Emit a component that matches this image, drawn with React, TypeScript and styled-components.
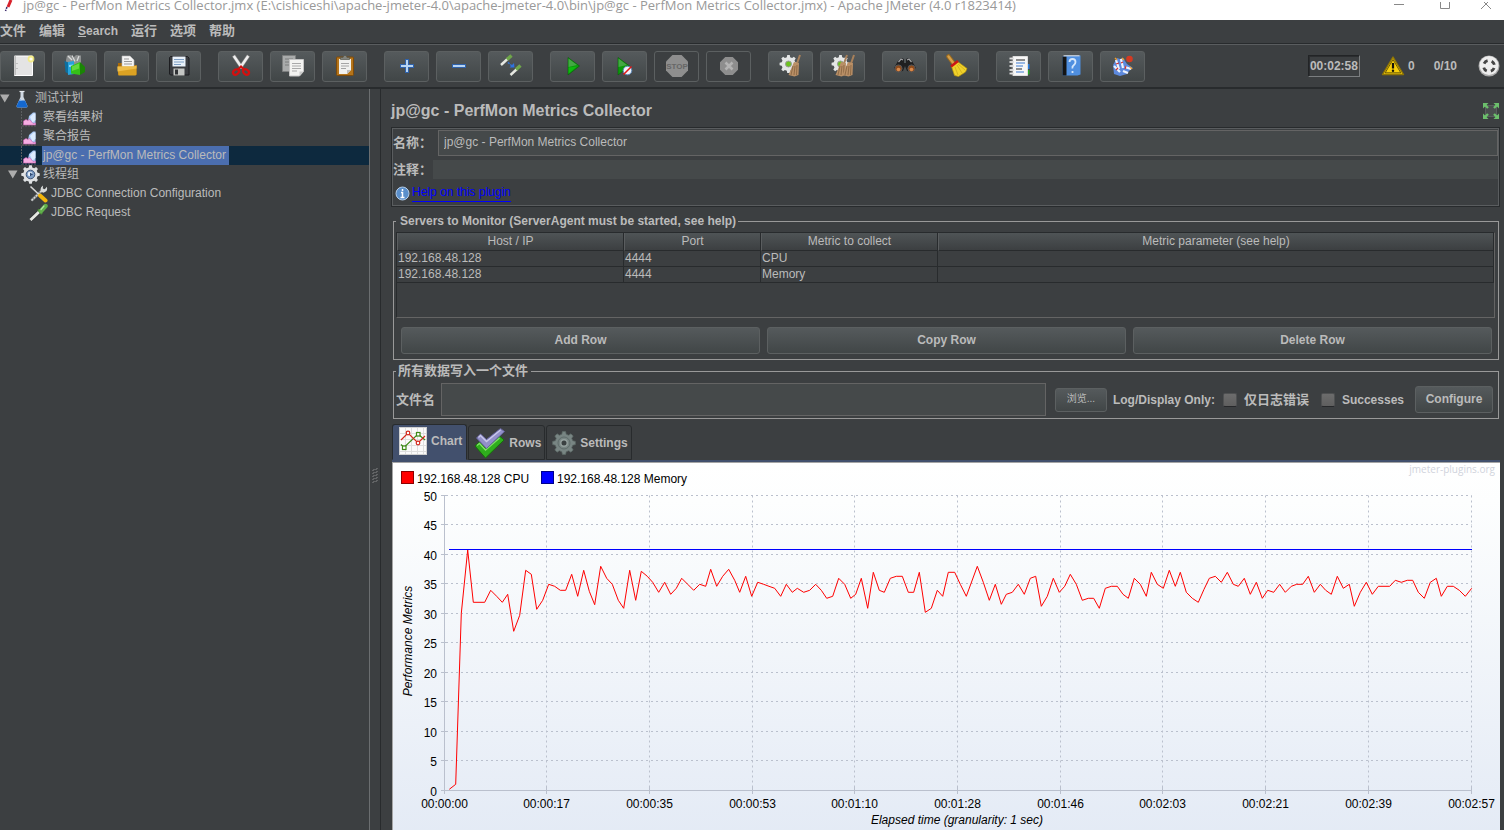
import React from "react";
import styled, { createGlobalStyle, css } from "styled-components";

const c = {
  bg: "#3c3f41",
  text: "#bbbbbb",
  dark: "#282b2d",
  light: "#5a5d5f",
  field: "#45494a",
  fieldBorder: "#646464",
  frame: "#999999",
};

const sans = `"Liberation Sans", "Noto Sans CJK SC", sans-serif`;

const GlobalStyle = createGlobalStyle`
  * { box-sizing: border-box; }
  body { margin: 0; background: ${c.bg}; overflow: hidden; }
  button, input, table, legend, label { font: inherit; color: inherit; }
`;

const Window = styled.div`
  display: flex;
  flex-direction: column;
  height: 100vh;
  overflow: hidden;
  background: ${c.bg};
  color: ${c.text};
  font: 12px/14px ${sans};
`;

/* ---------- title bar ---------- */

const TitleBar = styled.header`
  display: flex;
  align-items: flex-start;
  flex: none;
  height: 20px;
  overflow: hidden;
  background: #fff;
  color: #999;
`;

const TitleText = styled.h1`
  flex: 1;
  margin: 0 0 0 9px;
  font: 400 13px/10px "Open Sans", "Noto Sans", sans-serif;
  white-space: nowrap;
`;

const CaptionButton = styled.button`
  width: 46px;
  height: 14px;
  padding: 0;
  border: 0;
  background: none;
  line-height: 0;
  &:last-child { width: 36px; }
`;

/* ---------- menu ---------- */

const MenuBar = styled.nav`
  display: flex;
  flex: none;
  gap: 13px;
  height: 24px;
  border-bottom: 1px solid ${c.dark};
`;

const MenuButton = styled.button`
  align-self: flex-start;
  padding: 0;
  border: 0;
  background: none;
  font: 700 13px/22px ${sans};
`;

const Latin = styled.span`
  font-size: 12px;
`;

/* ---------- toolbar ---------- */

const ToolBar = styled.div`
  display: flex;
  align-items: center;
  flex: none;
  gap: 17px;
  height: 45px;
  border-top: 1px solid ${c.light};
  border-bottom: 2px solid ${c.dark};
`;

const ToolGroup = styled.div`
  display: flex;
  gap: 7px;
`;

const raised = css`
  border: 1px solid #5c6061;
  border-radius: 3px;
  background: linear-gradient(#555a5c, #414647);
`;

const ToolButton = styled.button`
  ${raised}
  display: flex;
  align-items: center;
  justify-content: center;
  width: 45px;
  height: 31px;
  padding: 0;
  &:disabled { background: none; }
`;

const Status = styled.div`
  display: flex;
  align-items: center;
  margin-left: auto;
  padding-right: 4px;
  font-weight: 700;
`;

const Timer = styled.output`
  margin-right: 21px;
  padding: 2px 1px;
  border: 1px solid;
  border-color: #222426 #7b7e80 #7b7e80 #222426;
  box-shadow: inset 1px 1px #2b2d2f;
  line-height: 16px;
`;

const WarningButton = styled.button`
  display: flex;
  align-items: center;
  gap: 3px;
  margin-right: 19px;
  padding: 0;
  border: 0;
  background: none;
`;

const Threads = styled.span`
  margin-right: 21px;
`;

/* ---------- tree ---------- */

const Body = styled.div`
  display: flex;
  flex: 1;
  min-height: 0;
`;

const TreePane = styled.aside`
  flex: 0 0 370px;
  border-right: 1px solid #6b6e70;
`;

const Tree = styled.ul`
  margin: 0;
  padding: 0;
  list-style: none;
`;

const TreeRow = styled.li<{ $indent: number; $selected?: boolean }>`
  display: flex;
  align-items: center;
  height: 19px;
  padding-left: ${(p) => p.$indent}px;
  background: ${(p) => (p.$selected ? "#0d293e" : "none")};
`;

const TreeArrow = styled.svg`
  flex: none;
  margin-right: 3px;
`;

const TreeLabel = styled.span<{ $selected?: boolean }>`
  padding: 0 3px 0 1px;
  line-height: 19px;
  white-space: nowrap;
  background: ${(p) => (p.$selected ? "#4b6eaf" : "none")};
`;

const IconSlot = styled.span`
  display: flex;
  align-items: center;
  flex: none;
  width: 21px;
  height: 19px;
`;

const FlaskSlot = styled(IconSlot)`
  padding-left: 3px;
`;

const Splitter = styled.div`
  display: flex;
  flex: 0 0 11px;
  align-items: center;
  justify-content: center;
  padding-top: 32px;
  border-right: 1px solid ${c.dark};
`;

/* ---------- editor ---------- */

const Editor = styled.main`
  flex: 1;
  min-width: 0;
  padding: 0 4px 0 10px;
  overflow: hidden;
`;

const Heading = styled.div`
  display: flex;
  align-items: center;
  justify-content: space-between;
  height: 38px;
  padding-top: 5px;
`;

const HeadingText = styled.h2`
  margin: 0;
  font: 700 16px/20px ${sans};
`;

const IconButton = styled.button`
  padding: 0;
  border: 0;
  background: none;
  line-height: 0;
`;

const NamePanel = styled.section`
  height: 80px;
  margin-bottom: 7px;
  padding: 1px 1px 0 1px;
  border: 1px solid ${c.dark};
  box-shadow: inset 0 0 0 1px ${c.light};
`;

const FieldRow = styled.div`
  display: flex;
  align-items: center;
  height: 27px;
`;

const FieldLabel = styled.label`
  flex: none;
  padding-right: 1px;
  font: 700 13px/20px ${sans};
`;

const NameInput = styled.input<{ $plain?: boolean }>`
  flex: 1;
  min-width: 0;
  height: ${(p) => (p.$plain ? 19 : 26)}px;
  margin-left: ${(p) => (p.$plain ? 0 : 5)}px;
  padding: 0 5px 1px;
  border: ${(p) => (p.$plain ? "0" : `1px solid ${c.fieldBorder}`)};
  background: ${c.field};
  outline: 0;
`;

const HelpRow = styled.div`
  display: flex;
  align-items: center;
  gap: 2px;
  height: 20px;
  padding-left: 2px;
`;

const HelpLink = styled.a`
  border-bottom: 1px solid #0000ff;
  color: #0000ff;
  line-height: 17px;
  text-decoration: none;
`;

const Group = styled.fieldset`
  min-width: 0;
  margin: 0 1px 4px 2px;
  padding: 4px 3px 5px 2px;
  border: 1px solid ${c.frame};
`;

const GroupTitle = styled.legend`
  padding: 0 2px 0 4px;
  font-weight: 700;
  line-height: 14px;
`;

const GroupTitleCjk = styled(GroupTitle)`
  padding: 0 3px 0 2px;
  font-size: 13px;
`;

const TableBox = styled.div`
  height: 86px;
  border: 1px solid ${c.dark};
  border-right-color: ${c.fieldBorder};
  border-bottom-color: ${c.fieldBorder};
`;

const Table = styled.table`
  width: 100%;
  table-layout: fixed;
  border-collapse: separate;
  border-spacing: 0;
  line-height: 15px;
  th {
    height: 18px;
    padding: 0;
    border-right: 1px solid ${c.dark};
    border-bottom: 1px solid ${c.dark};
    border-left: 1px solid ${c.light};
    background: linear-gradient(#4f5456, #3c3f41);
    font-weight: 400;
  }
  td {
    height: 16px;
    padding: 0 1px;
    border-right: 1px solid ${c.dark};
    border-bottom: 1px solid ${c.dark};
  }
`;

const ButtonRow = styled.div`
  display: flex;
  gap: 7px;
  padding: 9px 3px 0 5px;
`;

const Button = styled.button<{ $small?: boolean; $grow?: boolean }>`
  ${raised}
  flex: ${(p) => (p.$grow ? "1" : "none")};
  width: ${(p) => (p.$small ? 52 : 78)}px;
  height: ${(p) => (p.$small ? 24 : 27)}px;
  padding: 0 0 2px;
  font-size: ${(p) => (p.$small ? 10 : 12)}px;
  font-weight: ${(p) => (p.$small ? 400 : 700)};
`;

const FileGroup = styled(Group)`
  margin-bottom: 5px;
  padding: 5px 5px 2px 2px;
`;

const FileRow = styled.div`
  display: flex;
  align-items: center;
  font-weight: 700;
`;

const FileLabel = styled(FieldLabel)`
  padding-right: 6px;
`;

const FileInput = styled.input`
  flex: 1;
  min-width: 0;
  height: 33px;
  margin-right: 9px;
  padding: 0 5px;
  border: 1px solid ${c.fieldBorder};
  background: ${c.field};
  outline: 0;
`;

const OnlyText = styled.span`
  margin: 0 8px 0 6px;
`;

const CheckLabel = styled.label<{ $cjk?: boolean }>`
  display: flex;
  align-items: center;
  gap: 7px;
  margin-right: ${(p) => (p.$cjk ? 12 : 11)}px;
  font-size: ${(p) => (p.$cjk ? 13 : 12)}px;
`;

const CheckBox = styled.input`
  appearance: none;
  width: 14px;
  height: 14px;
  margin: 0;
  border: 1px solid #4f5152;
  border-bottom-color: #26282a;
  border-radius: 2px;
  background: linear-gradient(#6c6c6c, #5f5f5f);
`;

/* ---------- tabs ---------- */

const Tabs = styled.div`
  display: flex;
  align-items: flex-end;
  gap: 1px;
  height: 36px;
  margin-left: 1px;
`;

const Tab = styled.button<{ $active?: boolean }>`
  display: flex;
  align-items: center;
  gap: 4px;
  height: ${(p) => (p.$active ? 36 : 35)}px;
  padding: ${(p) => (p.$active ? "0 4px 2px 6px" : "0 3px 0 5px")};
  border: 1px solid ${c.dark};
  border-bottom-color: ${(p) => (p.$active ? "#42506d" : c.dark)};
  border-radius: 3px 3px 0 0;
  background: ${(p) => (p.$active ? "#42506d" : "none")};
  font-weight: 700;
`;

const ChartPanel = styled.div`
  border-top: 2px solid #42506d;
  margin-left: 1px;
`;

const ChartBox = styled.div`
  border-top: 1px solid #a5a5a5;
  border-left: 1px solid #a5a5a5;
  background: #fff;
`;

const ChartSvg = styled.svg`
  display: block;
  width: 100%;
  height: auto;
  font: 12px ${sans};
`;

/* ---------- icons ---------- */

const Icon = ({ children, size = 24 }: { children: React.ReactNode; size?: number }) => (
  <svg width={size} height={size} viewBox="0 0 24 24" aria-hidden="true">
    {children}
  </svg>
);

const gearPath = (cx: number, cy: number, r: number, teeth: number, depth: number) => {
  const pts: string[] = [];
  for (let i = 0; i < teeth; i++) {
    const a = (i / teeth) * Math.PI * 2;
    const s = Math.PI / teeth;
    [[-0.62, r - depth], [-0.36, r], [0.36, r], [0.62, r - depth]].forEach(([k, q]) =>
      pts.push(`${(cx + Math.cos(a + s * k) * q).toFixed(2)},${(cy + Math.sin(a + s * k) * q).toFixed(2)}`)
    );
  }
  return `M${pts.join("L")}Z`;
};

const NewIcon = () => (
  <Icon>
    <path d="M3.500 2h18v19.500h-18z" fill="#e4e4e4" stroke="#fff" />
    <path d="M4 2v19M6 9v1M6 14v1" stroke="#999" />
    <circle cx="20" cy="5" r="3.400" fill="#f6ec7a" opacity=".85" />
    <circle cx="20" cy="5" r="1.600" fill="#fffef0" />
  </Icon>
);

const TemplatesIcon = () => (
  <Icon>
    <path d="M3 6l1-4.500 4-.5 2 3 3-3 5 .5V9l-8 3-7-3z" fill="#8d9090" />
    <path d="M5 2l4 4M9 1.500l3 6M16 2l-2 5" stroke="#d8dada" strokeWidth="1.300" />
    <path d="M1.500 7l4 1.500V20l-3-2z" fill="#0d6f9f" />
    <path d="M5 8l6-1v13l-6 1z" fill="#27a3dd" />
    <path d="M6 11l4-.5v2l-4 .5z" fill="#8fd6f5" />
    <path d="M8 12l9-4v13l-9-1.500z" fill="#35c018" />
    <path d="M17 8l5 5v5l-5 3z" fill="#1a8505" />
    <path d="M9 12.500l7-3v5L9 17z" fill="#7be24f" opacity=".7" />
  </Icon>
);

const FolderIcon = () => (
  <Icon>
    <path d="M3 9h5l1 2h12.500v10H3z" fill="#a86a08" />
    <path d="M7 2h8l4 4v9H7z" fill="#f4f4f4" stroke="#bbb" strokeWidth=".6" />
    <path d="M9 5h5M9 7.500h8M9 10h8" stroke="#999" />
    <path d="M2.500 12.500h16l3-1v9l-1 1H3.500z" fill="#dba223" />
    <path d="M2.500 12.500h16l3-1v3l-19 3z" fill="#eebd4a" />
  </Icon>
);

const SaveIcon = () => (
  <Icon>
    <path d="M2.500 3.500l1-1h17l1.500 1.500v17H3.500l-1-1z" fill="#3a3c40" stroke="#1c1d20" />
    <path d="M5.500 2.500h13v10h-13z" fill="#e9f1fa" />
    <path d="M7 5.500h10M7 8h10M7 10.500h7" stroke="#7f9fc4" />
    <path d="M6.500 14.500h11v7h-11z" fill="#c4c6c4" />
    <path d="M8 15.500h3v5H8z" fill="#303235" />
  </Icon>
);

const CutIcon = () => (
  <Icon>
    <path d="M4.500 1.500L13 14M19.500 1.500L11 14" stroke="#8c8c8c" strokeWidth="3.600" />
    <path d="M4.800 2L13 14M19.200 2L11 14" stroke="#efefef" strokeWidth="2.400" />
    <ellipse cx="7" cy="18" rx="3.200" ry="2.400" transform="rotate(-38 7 18)" fill="none" stroke="#d40f0f" strokeWidth="2.200" />
    <ellipse cx="17" cy="18" rx="3.200" ry="2.400" transform="rotate(38 17 18)" fill="none" stroke="#d40f0f" strokeWidth="2.200" />
    <path d="M9 15.500l3-3 3 3" fill="none" stroke="#d40f0f" strokeWidth="2" />
  </Icon>
);

const CopyIcon = () => (
  <Icon>
    <path d="M1.500 1.500h13v16h-13z" fill="#a9abab" stroke="#7d7f7f" />
    <path d="M4 5h8M4 8h8M4 11h5" stroke="#7b7d7d" />
    <path d="M8.500 5.500h14v12l-4 4.500h-10z" fill="#f3f3f1" stroke="#c4c4c4" />
    <path d="M11 9.500h9M11 12h9M11 14.500h9M11 17h5" stroke="#a9a9a9" />
    <path d="M22.500 17.500h-4V22z" fill="#c9c9c9" />
  </Icon>
);

const PasteIcon = () => (
  <Icon>
    <rect x="3.500" y="3" width="17" height="18.500" rx="1" fill="#b4741a" stroke="#7d4a0a" />
    <path d="M6 5h12v11l-4 4H6z" fill="#f1f1ef" />
    <path d="M8 9.500h8M8 12h8M8 14.500h5" stroke="#a5a5a5" />
    <path d="M14 20v-4h4z" fill="#bdbdbd" />
    <path d="M7.500 5.500v-2h2.500l1-2h2l1 2h2.500v2z" fill="#83857f" stroke="#55574f" strokeWidth=".7" />
  </Icon>
);

const PlusIcon = () => (
  <Icon>
    <path d="M12 5v14M5 12h14" stroke="#2f62ab" strokeWidth="4" />
    <path d="M12 6v12M6 12h12" stroke="#b7d4f3" strokeWidth="2" />
  </Icon>
);

const MinusIcon = () => (
  <Icon>
    <path d="M5 12h14" stroke="#2f62ab" strokeWidth="4" />
    <path d="M6 12h12" stroke="#b7d4f3" strokeWidth="2" />
  </Icon>
);

const ToggleIcon = () => (
  <Icon>
    <path d="M2 11L9 4.500" stroke="#e6e8e2" strokeWidth="2.400" />
    <path d="M8 5.500l4.500-4" stroke="#6fa64a" strokeWidth="3.400" />
    <path d="M11.500 21l6.500-6" stroke="#e6e8e2" strokeWidth="2.400" />
    <path d="M17 15.500l4.500-4" stroke="#6fa64a" strokeWidth="3.400" />
    <path d="M9 8.500l4 3.500" stroke="#2f73e0" strokeWidth="1.400" strokeDasharray="2 1" />
    <path d="M15.500 13.500h-5l4.500-4.500z" fill="#2f73e0" />
  </Icon>
);

const PlayIcon = () => (
  <Icon>
    <path d="M7 3.500L18.500 12 7 21z" fill="#0b9a0b" stroke="#0a5a0a" strokeWidth=".6" />
    <path d="M7.500 4.500L16 11l-8.500 2z" fill="#5cae5c" opacity=".7" />
    <path d="M7.500 13.500L16 12.500l-8.500 7z" fill="#10d010" opacity=".6" />
  </Icon>
);

const PlayNoTimersIcon = () => (
  <Icon>
    <path d="M5 3.500L16.500 12 5 21z" fill="#0b9a0b" stroke="#0a5a0a" strokeWidth=".6" />
    <path d="M5.500 4.500L14 11l-8.500 2z" fill="#5cae5c" opacity=".7" />
    <circle cx="14.500" cy="16.500" r="4.300" fill="#eef3fa" stroke="#5b87b8" />
    <path d="M10.500 20.500l8-8" stroke="#e01818" strokeWidth="1.600" />
  </Icon>
);

const octagon = (r: number) => {
  const k = r * 0.414;
  return `M${12 - k} ${12 - r}H${12 + k}L${12 + r} ${12 - k}V${12 + k}L${12 + k} ${12 + r}H${12 - k}L${12 - r} ${12 + k}V${12 - k}Z`;
};

const StopIcon = () => (
  <Icon>
    <path d={octagon(11)} fill="#8e8e8e" />
    <text x="12" y="15" textAnchor="middle" fontFamily="Liberation Sans Narrow, Liberation Sans" fontSize="8" fontWeight="700" fill="#666">STOP</text>
  </Icon>
);

const ShutdownIcon = () => (
  <Icon>
    <path d={octagon(9)} fill="#8e8e8e" />
    <path d="M8.500 8.500l7 7M15.500 8.500l-7 7" stroke="#b4b4b4" strokeWidth="2.600" />
  </Icon>
);

const Broom = ({ x }: { x: number }) => (
  <g transform={`translate(${x} 0)`}>
    <path d="M21 1L18 9.500" stroke="#a8805a" strokeWidth="2" />
    <path d="M15 8l5 1-.5 12-4 1.500-6-1.500z" fill="#b98f66" />
    <path d="M14 12l-2 9M16 12l-1 9M18 11l-.5 10" stroke="#7c5c3a" strokeWidth=".7" />
  </g>
);

const ClearIcon = () => (
  <Icon>
    <path d={gearPath(9.500, 10, 9, 8, 2)} fill="#e4e6e6" />
    <circle cx="9.500" cy="10" r="3" fill="#6cc21f" stroke="#999" />
    <Broom x={0} />
  </Icon>
);

const ClearAllIcon = () => (
  <Icon>
    <path d={gearPath(9.500, 10, 9, 8, 2)} fill="#e4e6e6" />
    <circle cx="9.500" cy="10" r="3" fill="#6cc21f" stroke="#999" />
    <Broom x={-5} />
    <Broom x={2} />
  </Icon>
);

const SearchIcon = () => (
  <Icon>
    <path d="M5 7l3-3 3 1v4h2V5l3-1 3 3 4 7-3 4-6-1-2-5-2 5-6 1-3-4z" fill="#1f1f20" />
    <path d="M5.500 8L8 5l2 1M18.500 8L16 5l-2 1" stroke="#9ea0a2" strokeWidth="1.200" fill="none" />
    <circle cx="5.500" cy="14.500" r="3.600" fill="#8e4b1c" stroke="#55575a" />
    <circle cx="18.500" cy="14.500" r="3.600" fill="#8e4b1c" stroke="#55575a" />
    <circle cx="5.500" cy="15.500" r="1.800" fill="#d98a4c" />
    <circle cx="18.500" cy="15.500" r="1.800" fill="#d98a4c" />
  </Icon>
);

const ResetSearchIcon = () => (
  <Icon>
    <path d="M3.500 2.500L9 10" stroke="#9b6a1d" strokeWidth="4.500" strokeLinecap="round" />
    <path d="M3.500 2.500L9 10" stroke="#d5a04a" strokeWidth="2.400" strokeLinecap="round" />
    <path d="M12.500 7.500L22 14.500l-1.500 3.500-7 4.500-4-1-3-9z" fill="#f0d22a" stroke="#b8950f" strokeWidth=".7" />
    <path d="M10 13l3 8M12 11l5 8M13 10l7 6" stroke="#d6b51f" />
    <path d="M6 12.500l7-5.500" stroke="#cc1515" strokeWidth="2.600" />
  </Icon>
);

const FunctionIcon = () => (
  <Icon>
    <path d="M19 10h3.500v5H19z" fill="#2b7fe0" />
    <path d="M19 16h3.500v4.500H19z" fill="#26a526" />
    <path d="M5 2.500h15.500v19H5z" fill="#f7f7f7" stroke="#ddd" />
    <path d="M5 2v20" stroke="#333" />
    <path d="M9 6h9M9 15h6" stroke="#222" strokeWidth="1.200" />
    <path d="M9 9h9M9 12h7M9 18h8" stroke="#3c7ad1" strokeWidth="1.200" />
    {[4.5, 8, 12, 16, 19.5].map((y) => (
      <path key={y} d={`M2.500 ${y}h4.500`} stroke="#e0e0e0" strokeWidth="1.800" />
    ))}
  </Icon>
);

const HelpIcon = () => (
  <Icon>
    <path d="M3.500 2.500l3-1h15v19l-3 1h-15z" fill="#4f8fe0" />
    <path d="M3.500 2.500h4v19h-4z" fill="#141414" />
    <path d="M4.500 1.800h16" stroke="#e6e6e6" />
    <path d="M10.500 8q0-3 3-3t3 3q0 2-1.800 3.200T13.500 14.500M13.500 17v2" fill="none" stroke="#d4e6fb" strokeWidth="1.800" />
  </Icon>
);

const PluginsIcon = () => (
  <Icon>
    <path d="M2 11l4-7 3 1 3-1 4 6 6 4-4 3-2 3-7 2-6-2z" fill="#5d8ade" />
    <path d="M5 6l3 9M10 5l2 9M3 12l6 6M14 13l6 2M12 17l5 2" stroke="#eef3fd" strokeWidth="2.200" />
    <path d="M5 10l3-1M10 9l2-1M5 16l2-2M15 12l-1 3" stroke="#d03030" strokeWidth="1.200" />
    <path d="M11 4l2 2M19 13l2 2M4 4l2 2" stroke="#f0a030" strokeWidth="1.400" />
    <circle cx="18.500" cy="5" r="3.300" fill="#d33a22" />
  </Icon>
);

const WarningIcon = () => (
  <Icon>
    <path d="M12 3L22.500 20.500H1.500z" fill="#f7cf0a" stroke="#8e7405" strokeWidth="1.400" strokeLinejoin="round" />
    <path d="M12 5.500L19.800 18.800H4.200z" fill="none" stroke="#4a3e08" strokeWidth=".8" />
    <path d="M12 9v5.500" stroke="#14120a" strokeWidth="2.200" />
    <circle cx="12" cy="16.700" r="1.200" fill="#14120a" />
  </Icon>
);

const RunStateIcon = () => (
  <svg width="22" height="22" viewBox="0 0 22 22" aria-hidden="true">
    <circle cx="11" cy="11" r="10.500" fill="#a9a9a9" />
    <circle cx="11" cy="10.500" r="9.500" fill="#ededed" />
    <circle cx="11" cy="11" r="5.500" fill="none" stroke="#444" strokeWidth="2.800" strokeDasharray="4.400 4.240" strokeDashoffset="-2.120" />
  </svg>
);

const ExpandIcon = () => (
  <svg width="18" height="18" viewBox="0 0 18 18" aria-hidden="true">
    <rect x="3.500" y="3.500" width="11" height="11" fill="#4a4d4f" stroke="#5a5d5f" />
    {[0, 90, 180, 270].map((a) => (
      <g key={a} transform={`rotate(${a} 9 9)`}>
        <path d="M1 1h5.500L1 6.500z" fill="#6cbf6c" />
        <path d="M3 3l3 3" stroke="#6cbf6c" strokeWidth="2.400" />
      </g>
    ))}
  </svg>
);

const FlaskIcon = () => (
  <svg width="12" height="19" viewBox="0 0 12 19" aria-hidden="true">
    <path d="M4.500 2h3v6l4 9q0 1.500-1.500 1.500H2Q.5 18.500.5 17l4-9z" fill="#cfd8e2" />
    <path d="M3 11.500h6l2.500 5.500q0 1.500-1.500 1.500H2Q.5 18.500.5 17z" fill="#1468cf" />
    <path d="M3.500 12l1-2 1.500 2z" fill="#7fb5f2" />
    <path d="M3.500 2.500h5" stroke="#e8edf2" strokeWidth="1.200" />
  </svg>
);

const ListenerIcon = () => (
  <svg width="17" height="19" viewBox="0 0 17 19" aria-hidden="true">
    <path d="M.5 0v18.500M1 18h15" stroke="#5c5f61" strokeDasharray="2 1" />
    <path d="M7 13l1-5 4-3.500h2.500V17H9z" fill="#a9c8f5" />
    <path d="M9 9l3.500-3.500h2V12l-3 2.500z" fill="#dcebff" />
    <path d="M2.500 17v-4L5 11.500l2 1 1.500-1 3.500 4 2.500-.5v2z" fill="#f5aee2" stroke="#c85fae" strokeWidth=".6" />
  </svg>
);

const ThreadGroupIcon = () => (
  <svg width="19" height="19" viewBox="0 0 19 19" aria-hidden="true">
    <path d={gearPath(9.500, 9.500, 9.300, 8, 2)} fill="#dfe1e3" />
    <circle cx="9.500" cy="9.500" r="4.300" fill="#7d9dc6" stroke="#3a5175" />
    <circle cx="9" cy="9" r="2.300" fill="#e6eef8" />
    <path d="M9 7.500l3 2-3 2z" fill="#2e4b78" />
  </svg>
);

const ConfigIcon = () => (
  <svg width="19" height="19" viewBox="0 0 19 19" aria-hidden="true">
    <path d="M2.500 16.500L12.500 7" stroke="#777a7c" strokeWidth="3" />
    <path d="M2.500 16.500L12.500 7" stroke="#d7d9d9" strokeWidth="1.500" strokeDasharray="2 1" />
    <path d="M12 7.500q-1.500-4 2-6l-.2 3 2 .7 2-2.500q1.500 5-3.500 6z" fill="#d8dada" />
    <path d="M1.500 2.500l9 8.500" stroke="#d6d6d6" strokeWidth="1.600" />
    <path d="M11 11.500l5.500 5" stroke="#f2b50d" strokeWidth="4" strokeLinecap="round" />
  </svg>
);

const SamplerIcon = () => (
  <svg width="19" height="19" viewBox="0 0 19 19" aria-hidden="true">
    <path d="M2 16.500L12 7" stroke="#2b2d2e" strokeWidth="4.400" />
    <path d="M1.500 17L11.500 7.500" stroke="#e5e7e2" strokeWidth="3" />
    <path d="M9 6.500l4 4.500" stroke="#4d8a3a" strokeWidth="2.200" />
    <path d="M12 8l4.500-5" stroke="#5fae4a" strokeWidth="4.400" strokeLinecap="round" />
    <path d="M12 6.500l3-3.500" stroke="#b4e0a2" strokeWidth="1.200" strokeLinecap="round" />
  </svg>
);

const InfoIcon = () => (
  <svg width="15" height="15" viewBox="0 0 15 15" aria-hidden="true">
    <circle cx="7.500" cy="7.500" r="6.500" fill="#5a8fcb" stroke="#b3cce8" />
    <path d="M7.500 3v2M6 6.500h1.500v5M5.500 11.500h4" stroke="#fff" strokeWidth="1.500" fill="none" />
  </svg>
);

const ChartTabIcon = () => (
  <svg width="28" height="28" viewBox="0 0 28 28" aria-hidden="true">
    <rect x=".5" y=".5" width="27" height="27" fill="#fafafa" stroke="#d0d0d0" />
    <path d="M6.500 1v26M12.500 1v26M18.500 1v26M24.500 1v26M1 6.500h26M1 12.500h26M1 18.500h26M1 24.500h26" stroke="#dedede" />
    <path d="M2 17.500l3 3L19 7l7 6" fill="none" stroke="#3d8a16" strokeWidth="1.200" />
    <path d="M2 13l7-7 10 10 7-7" fill="none" stroke="#d3281c" strokeWidth="1.200" />
    <g fill="#fff" strokeWidth="1.200">
      <rect x="3.500" y="19" width="3.500" height="3.500" stroke="#3d8a16" />
      <rect x="17.500" y="5.500" width="3.500" height="3.500" stroke="#3d8a16" />
      <circle cx="9" cy="6" r="1.800" stroke="#d3281c" />
      <circle cx="19" cy="16" r="1.800" stroke="#d3281c" />
    </g>
  </svg>
);

const RowsTabIcon = () => (
  <svg width="31" height="32" viewBox="0 0 31 32" aria-hidden="true">
    <path d="M1 19l4.500-4 6 6L25.500 9l4.500 4-18.500 18z" fill="#2fae1d" stroke="#176d0b" />
    <path d="M3 18.500l2.500-2 6 6.500L25.500 11" fill="none" stroke="#7fe066" strokeWidth="1.400" />
    <path d="M2.500 11l4-4 6 5.500L26.500 1.500l4 3-18 17z" fill="#9290c9" stroke="#63619a" />
    <path d="M4.500 10.500L6.500 8.500l6 6L26.500 3" fill="none" stroke="#c9c8ea" strokeWidth="1.400" />
  </svg>
);

const SettingsTabIcon = () => (
  <svg width="24" height="24" viewBox="0 0 24 24" aria-hidden="true">
    <path d={gearPath(12, 12, 11.500, 8, 2.500)} fill="#788583" stroke="#5c6866" strokeWidth=".7" />
    <circle cx="12" cy="12" r="6" fill="none" stroke="#5f6c6b" />
    <circle cx="12" cy="12" r="3.200" fill="#3a4041" stroke="#95a19f" strokeWidth="1.400" />
  </svg>
);

/* ---------- chart ---------- */

const chart = { left: 51.5, right: 1078.5, top: 32.5, bottom: 327.5, width: 1107, height: 380 };

const xTicks: [number, string][] = [
  [51.5, "00:00:00"], [153.5, "00:00:17"], [256.5, "00:00:35"], [359.5, "00:00:53"],
  [461.5, "00:01:10"], [564.5, "00:01:28"], [667.5, "00:01:46"], [769.5, "00:02:03"],
  [872.5, "00:02:21"], [975.5, "00:02:39"], [1078.5, "00:02:57"],
];

const yTicks = [0, 5, 10, 15, 20, 25, 30, 35, 40, 45, 50];
const yOf = (v: number) =>
  Math.floor(chart.bottom - 0.5 - (v / 50) * (chart.bottom - chart.top)) + 0.5;

/* CPU samples on a grid of three units to the pixel, in sections with their own origin. */
const cpuSections = [
  {
    x: -13, y: 17,
    points:
      "208,928 227,913 244,400 263,210 280,367 314,367 332,331 350,349 367,367 383,343 401,454 419,406 437,271 454,283 470,388 488,361 506,313 524,319 541,331 557,331 575,283 593,349 611,271 628,334 644,374 662,259 680,295 697,313 715,361 731,385 749,271 767,361 784,274 802,289 818,307 836,337 854,307 872,343 889,325 905,295 923,313 941,331 959,313 977,319 992,268 1010,319 1028,289 1046,268 1064,301 1079,337 1097,289 1115,349 1133,307 1151,313 1167,319 1184,325",
  },
  {
    x: 387, y: 67,
    points:
      "2,199 19,163 37,187 52,175 71,187 89,181 107,163 124,181 140,205 158,199 176,145 194,163 212,205 227,193 244,145 263,235 280,127 298,181 313,187 331,145 349,139 367,139 385,187 401,187 418,127 436,247 454,235 472,181 488,199 505,127 524,127 541,163 559,199 592,109 610,157 628,211 646,163 664,223 679,193 697,187 715,163 733,193 751,145 767,139 784,229 802,199 820,145 838,187 854,169 871,133 889,163 907,211 925,205 941,205 958,235 976,175 994,169 1012,169 1029,193 1045,205",
  },
  {
    x: 737, y: 67,
    points:
      "13,145 31,163 49,199 64,127 82,163 100,175 118,121 136,169 151,127 169,187 187,205 205,217 222,178 238,145 256,139 274,157 292,127 310,163 325,169 343,145 361,193 379,157 397,205 413,181 431,187 449,163 466,187 484,169 500,163 518,163 535,139 553,187 571,163 587,181 604,193 622,139 640,175 658,163 673,229 691,187 709,157 727,193 745,169 779,169 796,151 814,157 832,151 848,151 865,187 883,205 901,157 919,145 934,199 952,169 970,169 988,181 1006,199 1025,175",
  },
];

const cpuLine = cpuSections
  .flatMap((s) =>
    s.points.split(" ").map((p) => {
      const [x, y] = p.split(",").map(Number);
      return `${(s.x + x / 3).toFixed(1)},${(s.y + y / 3).toFixed(1)}`;
    })
  )
  .join(" ");

const Chart = () => (
  <ChartSvg viewBox={`0 0 ${chart.width} ${chart.height}`} role="img" aria-label="Performance Metrics">
    <defs>
      <linearGradient id="plotBackground" x1="0" y1="0" x2="0" y2="1">
        <stop offset="0" stopColor="#ffffff" />
        <stop offset=".1" stopColor="#fdfefe" />
        <stop offset="1" stopColor="#e3eaf5" />
      </linearGradient>
    </defs>
    <rect width={chart.width} height={chart.height} fill="url(#plotBackground)" />

    <rect x="8.500" y="8.500" width="12" height="12" fill="#ff0000" stroke="#8c0000" />
    <text x="24" y="20">192.168.48.128 CPU</text>
    <rect x="148.500" y="8.500" width="12" height="12" fill="#0000ff" stroke="#00008c" />
    <text x="164" y="20">192.168.48.128 Memory</text>
    <text x="1102" y="10" textAnchor="end" fontFamily="Open Sans" fontSize="10" fill="#d0d3dc">
      jmeter-plugins.org
    </text>

    <g stroke="#bac0cd" fill="none">
      {yTicks.slice(1).map((v) => (
        <React.Fragment key={v}>
          <path d={`M48 ${yOf(v)}h7`} />
          <path d={`M58 ${yOf(v)}H${chart.right}`} strokeDasharray="2 3" />
        </React.Fragment>
      ))}
      {xTicks.slice(1).map(([x]) => (
        <React.Fragment key={x}>
          <path d={`M${x} ${chart.top}V${chart.bottom}`} strokeDasharray="2 3" />
          <path d={`M${x} 324v7`} />
        </React.Fragment>
      ))}
      <path d={`M${chart.left} ${chart.top}V331M48 ${chart.bottom}H${chart.right}`} />
    </g>

    {yTicks.map((v) => (
      <text key={v} x="44" y={yOf(v) + 5} textAnchor="end">{v}</text>
    ))}
    {xTicks.map(([x, label]) => (
      <text key={label} x={x} y="345" textAnchor="middle">{label}</text>
    ))}

    <text x="564" y="361" textAnchor="middle" fontStyle="italic">Elapsed time (granularity: 1 sec)</text>
    <text transform="translate(19 178) rotate(-90)" textAnchor="middle" fontStyle="italic">
      Performance Metrics
    </text>

    <polyline points={cpuLine} fill="none" stroke="#ff0000" />
    <path d="M56 86.500H1079" stroke="#0000ff" />
  </ChartSvg>
);

/* ---------- content ---------- */

type Tool = { label: string; icon: React.ReactNode; disabled?: boolean };

const toolGroups: Tool[][] = [
  [
    { label: "New", icon: <NewIcon /> },
    { label: "Templates", icon: <TemplatesIcon /> },
    { label: "Open", icon: <FolderIcon /> },
    { label: "Save", icon: <SaveIcon /> },
  ],
  [
    { label: "Cut", icon: <CutIcon /> },
    { label: "Copy", icon: <CopyIcon /> },
    { label: "Paste", icon: <PasteIcon /> },
  ],
  [
    { label: "Expand all", icon: <PlusIcon /> },
    { label: "Collapse all", icon: <MinusIcon /> },
    { label: "Toggle", icon: <ToggleIcon /> },
  ],
  [
    { label: "Start", icon: <PlayIcon /> },
    { label: "Start no pauses", icon: <PlayNoTimersIcon /> },
    { label: "Stop", icon: <StopIcon />, disabled: true },
    { label: "Shutdown", icon: <ShutdownIcon />, disabled: true },
  ],
  [
    { label: "Clear", icon: <ClearIcon /> },
    { label: "Clear all", icon: <ClearAllIcon /> },
  ],
  [
    { label: "Search tree", icon: <SearchIcon /> },
    { label: "Reset search", icon: <ResetSearchIcon /> },
  ],
  [
    { label: "Function helper", icon: <FunctionIcon /> },
    { label: "Help", icon: <HelpIcon /> },
    { label: "Plugins manager", icon: <PluginsIcon /> },
  ],
];

type Node = { label: string; indent: number; icon: React.ReactNode; open?: boolean; selected?: boolean };

const nodes: Node[] = [
  { label: "测试计划", indent: 0, icon: <FlaskIcon />, open: true },
  { label: "察看结果树", indent: 21, icon: <ListenerIcon /> },
  { label: "聚合报告", indent: 21, icon: <ListenerIcon /> },
  { label: "jp@gc - PerfMon Metrics Collector", indent: 21, icon: <ListenerIcon />, selected: true },
  { label: "线程组", indent: 8, icon: <ThreadGroupIcon />, open: true },
  { label: "JDBC Connection Configuration", indent: 29, icon: <ConfigIcon /> },
  { label: "JDBC Request", indent: 29, icon: <SamplerIcon /> },
];

const servers = [
  ["192.168.48.128", "4444", "CPU", ""],
  ["192.168.48.128", "4444", "Memory", ""],
];

export default function App() {
  return (
    <Window>
      <GlobalStyle />
      <TitleBar>
        <svg width="14" height="12" viewBox="0 0 14 12" aria-hidden="true">
          <path d="M11 0L8 7" stroke="#d8212b" strokeWidth="3" />
          <path d="M7 7l-1.500 4" stroke="#3b2a6b" strokeWidth="1.500" strokeDasharray="2 1" />
        </svg>
        <TitleText>
          jp@gc - PerfMon Metrics Collector.jmx (E:\cishiceshi\apache-jmeter-4.0\apache-jmeter-4.0\bin\jp@gc - PerfMon Metrics Collector.jmx) - Apache JMeter (4.0 r1823414)
        </TitleText>
        <CaptionButton aria-label="Minimize">
          <svg width="10" height="10"><path d="M0 2.500h10" stroke="#888" /></svg>
        </CaptionButton>
        <CaptionButton aria-label="Maximize">
          <svg width="10" height="10"><path d="M.5 0v6.500h9V0" fill="none" stroke="#888" /></svg>
        </CaptionButton>
        <CaptionButton aria-label="Close">
          <svg width="10" height="10"><path d="M0 -3l10 10M10 -3L0 7" stroke="#888" /></svg>
        </CaptionButton>
      </TitleBar>

      <MenuBar>
        <MenuButton>文件</MenuButton>
        <MenuButton>编辑</MenuButton>
        <MenuButton><Latin><u>S</u>earch</Latin></MenuButton>
        <MenuButton>运行</MenuButton>
        <MenuButton>选项</MenuButton>
        <MenuButton>帮助</MenuButton>
      </MenuBar>

      <ToolBar role="toolbar">
        {toolGroups.map((group, i) => (
          <ToolGroup key={i}>
            {group.map((t) => (
              <ToolButton key={t.label} aria-label={t.label} disabled={t.disabled}>{t.icon}</ToolButton>
            ))}
          </ToolGroup>
        ))}
        <Status>
          <Timer>00:02:58</Timer>
          <WarningButton aria-label="Log errors"><WarningIcon />0</WarningButton>
          <Threads>0/10</Threads>
          <RunStateIcon />
        </Status>
      </ToolBar>

      <Body>
        <TreePane>
          <Tree role="tree">
            {nodes.map((n) => {
              const Slot = n.indent === 0 ? FlaskSlot : IconSlot;
              return (
                <TreeRow key={n.label} role="treeitem" aria-selected={!!n.selected} $indent={n.indent} $selected={n.selected}>
                  {n.open && (
                    <TreeArrow width="10" height="9" aria-hidden="true">
                      <path d="M0 .5h9.500L4.750 8.500z" fill="#adadad" />
                    </TreeArrow>
                  )}
                  <Slot>{n.icon}</Slot>
                  <TreeLabel $selected={n.selected}>{n.label}</TreeLabel>
                </TreeRow>
              );
            })}
          </Tree>
        </TreePane>
        <Splitter role="separator">
          <svg width="6" height="16" aria-hidden="true">
            {[1, 4, 7, 10, 13].map((y) => (
              <path key={y} d={`M1 ${y + 1.5}l1 -1M4 ${y + 0.5}l1 -1`} stroke="#d4d4d4" />
            ))}
          </svg>
        </Splitter>

        <Editor>
          <Heading>
            <HeadingText>jp@gc - PerfMon Metrics Collector</HeadingText>
            <IconButton aria-label="Expand"><ExpandIcon /></IconButton>
          </Heading>

          <NamePanel>
            <FieldRow>
              <FieldLabel htmlFor="name">名称：</FieldLabel>
              <NameInput id="name" defaultValue="jp@gc - PerfMon Metrics Collector" />
            </FieldRow>
            <FieldRow>
              <FieldLabel htmlFor="comment">注释：</FieldLabel>
              <NameInput id="comment" $plain />
            </FieldRow>
            <HelpRow>
              <InfoIcon />
              <HelpLink href="#help">Help on this plugin</HelpLink>
            </HelpRow>
          </NamePanel>

          <Group>
            <GroupTitle>Servers to Monitor (ServerAgent must be started, see help)</GroupTitle>
            <TableBox>
              <Table>
                <colgroup>
                  <col width="227" />
                  <col width="137" />
                  <col width="177" />
                  <col />
                </colgroup>
                <thead>
                  <tr>
                    <th>Host / IP</th>
                    <th>Port</th>
                    <th>Metric to collect</th>
                    <th>Metric parameter (see help)</th>
                  </tr>
                </thead>
                <tbody>
                  {servers.map((row, i) => (
                    <tr key={i}>{row.map((cell, j) => <td key={j}>{cell}</td>)}</tr>
                  ))}
                </tbody>
              </Table>
            </TableBox>
            <ButtonRow>
              <Button $grow>Add Row</Button>
              <Button $grow>Copy Row</Button>
              <Button $grow>Delete Row</Button>
            </ButtonRow>
          </Group>

          <FileGroup>
            <GroupTitleCjk>所有数据写入一个文件</GroupTitleCjk>
            <FileRow>
              <FileLabel htmlFor="file">文件名</FileLabel>
              <FileInput id="file" />
              <Button $small>浏览...</Button>
              <OnlyText>Log/Display Only:</OnlyText>
              <CheckLabel $cjk><CheckBox type="checkbox" />仅日志错误</CheckLabel>
              <CheckLabel><CheckBox type="checkbox" />Successes</CheckLabel>
              <Button>Configure</Button>
            </FileRow>
          </FileGroup>

          <Tabs role="tablist">
            <Tab role="tab" aria-selected $active><ChartTabIcon />Chart</Tab>
            <Tab role="tab" aria-selected={false}><RowsTabIcon />Rows</Tab>
            <Tab role="tab" aria-selected={false}><SettingsTabIcon />Settings</Tab>
          </Tabs>
          <ChartPanel role="tabpanel">
            <ChartBox>
              <Chart />
            </ChartBox>
          </ChartPanel>
        </Editor>
      </Body>
    </Window>
  );
}
